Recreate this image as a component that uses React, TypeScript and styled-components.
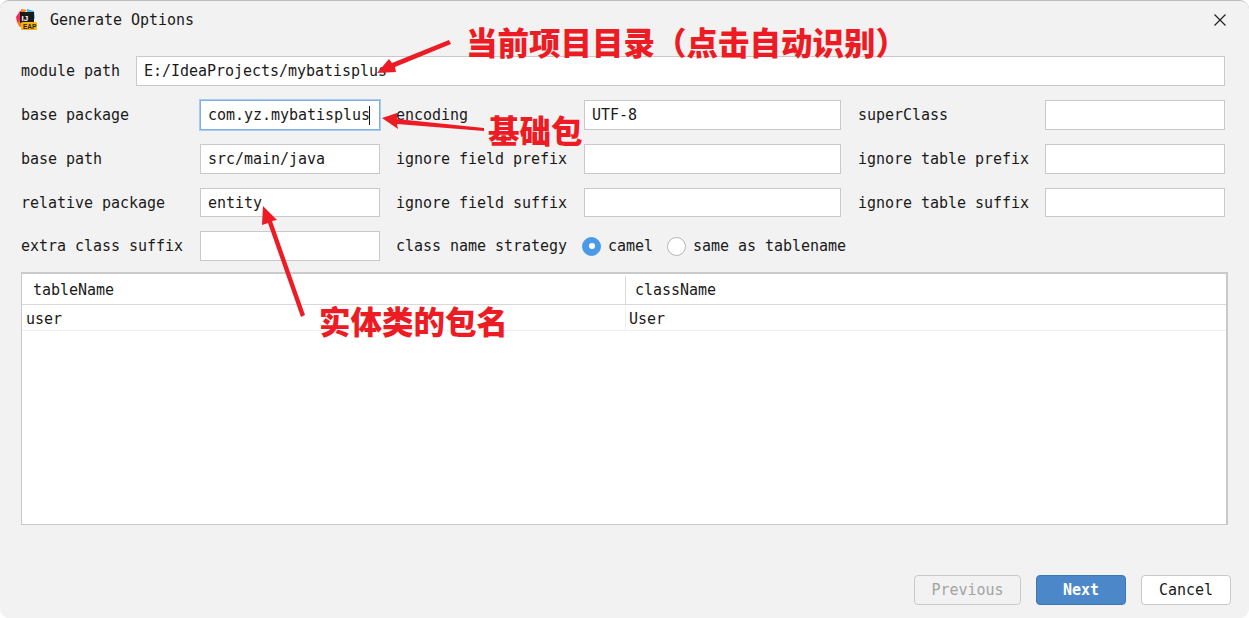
import React from "react";
import styled, { createGlobalStyle } from "styled-components";

const Global = createGlobalStyle`
  html, body { margin: 0; padding: 0; background: #fff; }
  * { box-sizing: border-box; }
`;

const Dialog = styled.div`
  position: relative;
  width: 1249px;
  height: 618px;
  overflow: hidden;
  display: flex;
  flex-direction: column;
  background: #f2f2f2;
  border-top: 1px solid #bdbdbd;
  border-radius: 9px;
  color: #1a1a1a;
  font-family: "DejaVu Sans Mono", "Liberation Mono", monospace;
  font-size: 15px;
  letter-spacing: -0.03px;
`;

const TitleBar = styled.div`
  height: 37px;
  display: flex;
  align-items: center;
  padding: 0 23px 0 15px;
`;

const Title = styled.div`
  margin-left: 12px;
  margin-top: 1px;
  flex: 1;
`;

const Form = styled.div`
  margin-top: 18px;
  padding: 0 24px 0 21px;
  display: grid;
  grid-template-columns: 179px 180px 204px 257px 204px 180px;
  grid-template-rows: 30px 30px 30px 29px 30px;
  row-gap: 14px;
  align-items: center;
`;

const Label = styled.div<{ $indent?: number }>`
  white-space: nowrap;
  padding-left: ${(p) => p.$indent ?? 0}px;
`;

const PathRow = styled.div`
  grid-column: 1 / -1;
  height: 100%;
  display: flex;
  align-items: center;
`;

const PathLabel = styled.div`
  width: 115px;
`;

const Field = styled.div<{ $focused?: boolean; $grow?: boolean }>`
  height: 100%;
  flex: ${(p) => (p.$grow ? 1 : "none")};
  display: flex;
  align-items: center;
  padding-left: 7px;
  background: #fff;
  border: 1px solid #c9c9c9;
  white-space: nowrap;
  ${(p) =>
    p.$focused &&
    "border-color: #7eb0e6; box-shadow: 0 0 0 1px #a8cbf0;"}
`;

const Caret = styled.span`
  display: inline-block;
  width: 1px;
  height: 19px;
  margin-left: -1px;
  background: #111;
`;

const RadioRow = styled.div`
  grid-column: 4 / -1;
  margin-left: -2px;
  display: flex;
  align-items: center;
  gap: 14px;
`;

const RadioItem = styled.div`
  display: flex;
  align-items: center;
  gap: 7px;
`;

const RadioDot = styled.span<{ $on?: boolean }>`
  width: 19px;
  height: 19px;
  border-radius: 50%;
  background: ${(p) => (p.$on ? "#4a9ae6" : "#fff")};
  border: 1px solid ${(p) => (p.$on ? "#4a9ae6" : "#b5b5b5")};
  display: flex;
  align-items: center;
  justify-content: center;
  &::after {
    content: "";
    width: 6px;
    height: 6px;
    border-radius: 50%;
    background: ${(p) => (p.$on ? "#fff" : "transparent")};
  }
`;

const TableBox = styled.div`
  margin: 11px 21px 0;
  height: 253px;
  background: #fff;
  border: 1px solid #c9c9c9;
  border-top: 2px solid #cacaca;
  border-right-width: 2px;
`;

const HeaderRow = styled.div`
  height: 31px;
  display: grid;
  grid-template-columns: 603px 1fr;
  border-bottom: 1px solid #d9d9d9;
`;

const HeaderCell = styled.div<{ $split?: boolean }>`
  display: flex;
  align-items: center;
  padding: 0 0 1px ${(p) => (p.$split ? "9px" : "11px")};
  margin-top: 2px;
  border-left: ${(p) => (p.$split ? "1px solid #d9d9d9" : "none")};
`;

const DataRow = styled.div`
  height: 26px;
  display: grid;
  grid-template-columns: 603px 1fr;
  border-bottom: 1px solid #efefef;
`;

const DataCell = styled.div<{ $split?: boolean }>`
  display: flex;
  align-items: center;
  padding: 2px 0 0 ${(p) => (p.$split ? "3px" : "4px")};
  border-left: ${(p) => (p.$split ? "1px solid #efefef" : "none")};
`;

const Footer = styled.div`
  margin-top: auto;
  padding: 0 18px 13px 0;
  display: flex;
  justify-content: flex-end;
  gap: 15px;
`;

const Button = styled.div<{ $kind?: "primary" | "disabled" }>`
  width: ${(p) => (p.$kind === "disabled" ? "107px" : "90px")};
  height: 30px;
  display: flex;
  align-items: center;
  justify-content: center;
  border-radius: 4px;
  border: 1px solid ${(p) => (p.$kind === "primary" ? "#3f77b5" : "#c9c9c9")};
  background: ${(p) =>
    p.$kind === "primary" ? "#4c88c9" : p.$kind === "disabled" ? "#f2f2f2" : "#fff"};
  color: ${(p) =>
    p.$kind === "primary" ? "#fff" : p.$kind === "disabled" ? "#a3a3a3" : "#1a1a1a"};
  font-weight: ${(p) => (p.$kind === "primary" ? 700 : 400)};
`;

const Overlay = styled.svg`
  position: absolute;
  left: 0;
  top: -1px;
  width: 1249px;
  height: 618px;
  pointer-events: none;
`;

const Note = styled.div<{ $x: number; $y: number }>`
  position: absolute;
  left: ${(p) => p.$x}px;
  top: ${(p) => p.$y}px;
  color: #ed1c24;
  font-family: "Noto Sans CJK SC", sans-serif;
  font-weight: 900;
  font-size: 31.5px;
  line-height: 40px;
  letter-spacing: 0;
  white-space: nowrap;
`;

const AppIcon = () => (
  <svg width="23" height="21" viewBox="0 0 23 21">
    <path d="M1 8 L5 2 L10 1 L9 12 L6 16 L2 13 Z" fill="#fe2857" />
    <path d="M6 0 L12 1 L6 6 Z" fill="#fc801d" />
    <path d="M2 13 L7 11 L7 19 L4 17 Z" fill="#f97a12" />
    <path d="M12 0 L19 2 L20 10 L12 5 Z" fill="#3bbcf0" />
    <rect x="5" y="3" width="14" height="11" fill="#1b1b1b" />
    <text x="6.5" y="11.5" fontSize="8" fontWeight="700" fill="#fff" fontFamily="Liberation Sans">IJ</text>
    <rect x="6" y="13" width="16" height="8" rx="1.5" fill="#f9b013" />
    <text x="8" y="19.5" fontSize="6.5" fontWeight="700" fill="#222" fontFamily="Liberation Sans">EAP</text>
  </svg>
);

const CloseIcon = () => (
  <svg width="12" height="12" viewBox="0 0 12 12">
    <path d="M0.5 0.5 L11.5 11.5 M11.5 0.5 L0.5 11.5" stroke="#222" strokeWidth="1.2" fill="none" />
  </svg>
);

export default function App() {
  return (
    <>
      <Global />
      <Dialog>
        <TitleBar>
          <AppIcon />
          <Title>Generate Options</Title>
          <CloseIcon />
        </TitleBar>
        <Form>
          <PathRow>
            <PathLabel>module path</PathLabel>
            <Field $grow>E:/IdeaProjects/mybatisplus</Field>
          </PathRow>

          <Label>base package</Label>
          <Field $focused>
            com.yz.mybatisplus
            <Caret />
          </Field>
          <Label $indent={16}>encoding</Label>
          <Field>UTF-8</Field>
          <Label $indent={17}>superClass</Label>
          <Field />

          <Label>base path</Label>
          <Field>src/main/java</Field>
          <Label $indent={16}>ignore field prefix</Label>
          <Field />
          <Label $indent={17}>ignore table prefix</Label>
          <Field />

          <Label>relative package</Label>
          <Field>entity</Field>
          <Label $indent={16}>ignore field suffix</Label>
          <Field />
          <Label $indent={17}>ignore table suffix</Label>
          <Field />

          <Label>extra class suffix</Label>
          <Field />
          <Label $indent={16}>class name strategy</Label>
          <RadioRow>
            <RadioItem>
              <RadioDot $on />
              camel
            </RadioItem>
            <RadioItem>
              <RadioDot />
              same as tablename
            </RadioItem>
          </RadioRow>
        </Form>

        <TableBox>
          <HeaderRow>
            <HeaderCell>tableName</HeaderCell>
            <HeaderCell $split>className</HeaderCell>
          </HeaderRow>
          <DataRow>
            <DataCell>user</DataCell>
            <DataCell $split>User</DataCell>
          </DataRow>
        </TableBox>

        <Footer>
          <Button $kind="disabled">Previous</Button>
          <Button $kind="primary">Next</Button>
          <Button>Cancel</Button>
        </Footer>

        <Overlay viewBox="0 0 1249 618">
          <path d="M377 73 L389 59 L392 63 L449 40 L451 44 L395 67 L396 72 Z" fill="#ed1c24" />
          <path d="M382 118 L397 113 L397 119 L484 128 L484 131 L397 124 L398 129 Z" fill="#ed1c24" />
          <path d="M263 206 L277 220 L272 221 L305 315 L301 317 L268 223 L262 225 Z" fill="#ed1c24" />
        </Overlay>
        <Note $x={466} $y={20}>当前项目目录（点击自动识别）</Note>
        <Note $x={488} $y={108}>基础包</Note>
        <Note $x={319} $y={299}>实体类的包名</Note>
      </Dialog>
    </>
  );
}
